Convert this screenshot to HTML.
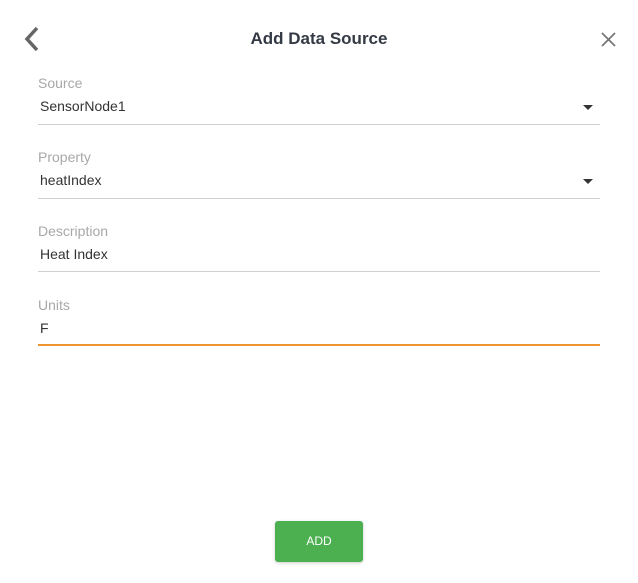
<!DOCTYPE html>
<html><head><style>
body{margin:0;width:638px;height:583px;background:#fff;font-family:"Liberation Sans",sans-serif;position:relative;overflow:hidden}
.t{position:absolute;left:0;width:638px;top:29px;text-align:center;font-size:17px;font-weight:bold;color:#343a45}
.lab{position:absolute;left:38px;font-size:14px;color:#a8a8a8}
.val{position:absolute;left:40px;font-size:14px;color:#333}
.line{position:absolute;left:38px;width:562px;height:1px;background:#d0d0d0}
.arr{position:absolute;left:583px;width:0;height:0;border-left:5px solid transparent;border-right:5px solid transparent;border-top:5px solid #333}
.btn{position:absolute;left:275px;top:521px;width:88px;height:41px;background:#4caf50;border-radius:3px;color:#fff;font-size:12px;text-align:center;line-height:41px;box-shadow:0 1px 3px rgba(0,0,0,.2)}
</style></head><body>
<svg style="position:absolute;left:20px;top:26px" width="22" height="26"><path d="M17 2 L7 13 L17 24" stroke="#666" stroke-width="3.5" fill="none"/></svg>
<svg style="position:absolute;left:600px;top:31px" width="17" height="17"><path d="M2 2L15 15M15 2L2 15" stroke="#777" stroke-width="1.8"/></svg>
<div class="t">Add Data Source</div>
<div class="lab" style="top:75px">Source</div><div class="val" style="top:98px">SensorNode1</div><div class="arr" style="top:105px"></div><div class="line" style="top:124px"></div>
<div class="lab" style="top:149px">Property</div><div class="val" style="top:172px">heatIndex</div><div class="arr" style="top:179px"></div><div class="line" style="top:198px"></div>
<div class="lab" style="top:223px">Description</div><div class="val" style="top:246px">Heat Index</div><div class="line" style="top:271px"></div>
<div class="lab" style="top:297px">Units</div><div class="val" style="top:320px">F</div><div class="line" style="top:344px;height:2px;background:#f0962e"></div>
<div class="btn">ADD</div>
</body></html>
